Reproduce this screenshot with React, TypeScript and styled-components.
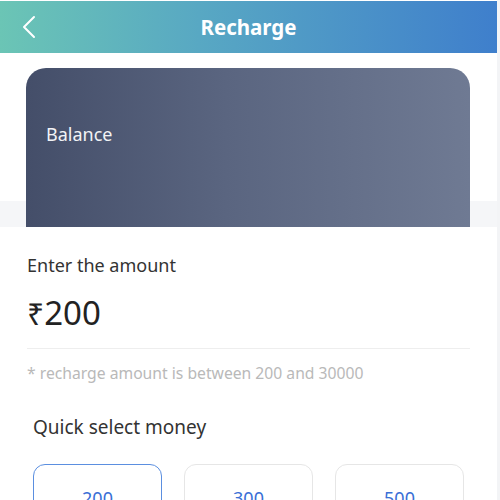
import React, { FC, useState } from 'react';
import styled, { createGlobalStyle } from 'styled-components';

const GlobalStyle = createGlobalStyle`
	html, body {
		margin: 0;
		padding: 0;
		background: #f3f4f6;
		font-family: "Noto Sans", "Open Sans", sans-serif;
	}
`;

const QUICK_AMOUNTS = [200, 300, 500];

const App: FC = () => {
	const [selected, setSelected] = useState(200);

	return (
		<>
			<GlobalStyle />
			<Page>
				<Header>
					<BackButton aria-label="back">
						<svg width="14" height="24" viewBox="0 0 14 24" fill="none">
							<path d="M12 2 L2 12 L12 22" stroke="#fff" strokeWidth="2" strokeLinecap="round" strokeLinejoin="round" />
						</svg>
					</BackButton>
					<Title>Recharge</Title>
				</Header>
				<CardArea>
					<BalanceCard>
						<BalanceLabel>Balance</BalanceLabel>
					</BalanceCard>
				</CardArea>
				<Content>
					<SectionLabel>Enter the amount</SectionLabel>
					<AmountRow>
						<Currency>₹</Currency>
						<Amount>{selected}</Amount>
					</AmountRow>
					<Hint>* recharge amount is between 200 and 30000</Hint>
					<QuickTitle>Quick select money</QuickTitle>
					<QuickGrid>
						{QUICK_AMOUNTS.map((value) => (
							<QuickButton key={value} isActive={value === selected} onClick={() => setSelected(value)}>
								{value}
							</QuickButton>
						))}
					</QuickGrid>
				</Content>
			</Page>
		</>
	);
};

const Page = styled.div`
	width: 497px;
	min-height: 500px;
	background: #fff;
	padding-top: 1px;
`;

const Header = styled.div`
	position: relative;
	height: 52px;
	display: flex;
	align-items: center;
	justify-content: center;
	background: linear-gradient(90deg, #6bc5b5 0%, #58a8c3 40%, #3f7fcc 100%);
`;

const BackButton = styled.button`
	position: absolute;
	left: 18px;
	top: 14px;
	padding: 0 4px;
	border: 0;
	background: none;
	display: flex;
`;

const Title = styled.div`
	color: #fff;
	font-size: 20.5px;
	font-weight: 700;
`;

const CardArea = styled.div`
	padding: 15px 27px 0 26px;
	background: linear-gradient(180deg, #fff 0, #fff 148px, #f5f6f8 148px);
`;

const BalanceCard = styled.div`
	height: 159px;
	border-radius: 20px 20px 0 0;
	background: linear-gradient(90deg, #444e69 0%, #5a6580 45%, #6f7a93 100%);
	padding: 54px 20px 0;
	box-sizing: border-box;
`;

const BalanceLabel = styled.div`
	color: #f2f3f6;
	font-size: 18px;
	line-height: 24px;
`;

const Content = styled.div`
	padding: 25px 27px 0 27px;
`;

const SectionLabel = styled.div`
	color: #333;
	font-size: 18px;
	line-height: 26px;
`;

const AmountRow = styled.div`
	display: flex;
	align-items: baseline;
	margin-top: 13px;
	padding-bottom: 12px;
	border-bottom: 1px solid #eeeeee;
	color: #222;
	line-height: 44px;
`;

const Currency = styled.span`
	font-size: 30px;
`;

const Amount = styled.span`
	font-size: 33px;
`;

const Hint = styled.div`
	margin-top: 12px;
	color: #b9b9b9;
	font-size: 15.7px;
	line-height: 24px;
`;

const QuickTitle = styled.div`
	margin-top: 29px;
	padding-left: 6px;
	color: #333;
	font-size: 19px;
	line-height: 26px;
`;

const QuickGrid = styled.div`
	display: grid;
	grid-template-columns: repeat(3, 129px);
	column-gap: 22px;
	margin-top: 24px;
	padding-left: 6px;
`;

const QuickButton = styled.button<{ isActive: boolean }>`
	height: 60px;
	border-radius: 12px;
	border: 1px solid ${(props) => (props.isActive ? '#5b8fe0' : '#e6e6e6')};
	background: #fff;
	color: #3a6fd6;
	font-family: inherit;
	font-size: 18px;
	padding-top: 8px;
`;

export default App;
